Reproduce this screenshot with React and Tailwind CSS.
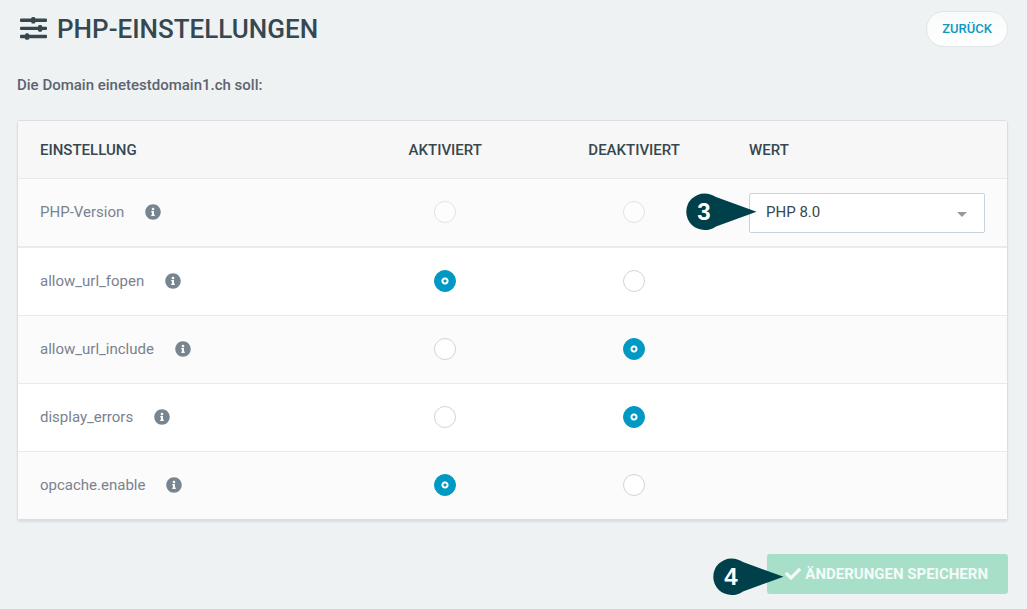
import React, { useState } from "react"
import { FaCheck, FaInfoCircle } from "react-icons/fa"

const switches = [
  { name: "allow_url_fopen", enabled: true },
  { name: "allow_url_include", enabled: false },
  { name: "display_errors", enabled: false },
  { name: "opcache.enable", enabled: true },
]

const radioClass =
  "block mx-auto w-[22px] h-[22px] appearance-none rounded-full border border-[#ced5dd] bg-white checked:border-[#0099c3] checked:bg-[radial-gradient(circle,#0099c3_1px,#fff_2px,#fff_3px,#0099c3_4px)] disabled:opacity-60"

const SlidersIcon = () => (
  <svg width="27" height="24" viewBox="0 0 27 24" fill="#37474f" aria-hidden="true">
    <rect x="0" y="1.6" width="27" height="3.4" rx="1" />
    <rect x="0" y="9.7" width="27" height="3.4" rx="1" />
    <rect x="0" y="17.8" width="27" height="3.4" rx="1" />
    <rect x="11.2" y="0" width="4.2" height="6.6" rx="1.5" />
    <rect x="18" y="8.1" width="4.2" height="6.6" rx="1.5" />
    <rect x="5" y="16.2" width="4.2" height="6.6" rx="1.5" />
  </svg>
)

// numbered drop-shaped pointer, the tip points to the right
const Marker = ({ number, className }) => (
  <svg
    width="72"
    height="38"
    viewBox="0 0 72 38"
    className={`absolute pointer-events-none ${className}`}
  >
    <path
      d="M18.5 0.5C23 0.5 26 1.8 30 4L70.5 18.8L30 33.4C26 36 23 37 18.5 37A18.25 18.25 0 0 1 18.5 0.5Z"
      fill="#00404a"
    />
    <text
      x="18"
      y="27"
      textAnchor="middle"
      fill="#fff"
      className="font-['Liberation_Sans',sans-serif] font-bold text-[24px]"
    >
      {number}
    </text>
  </svg>
)

const SettingName = ({ children }) => (
  <th scope="row" className="pl-[22px] text-left font-normal">
    <span className="flex items-center gap-[21px]">
      {children}
      <FaInfoCircle className="text-[#778591]" size={16} />
    </span>
  </th>
)

const App = () => {
  const [version, setVersion] = useState("8.0")
  const [values, setValues] = useState(
    Object.fromEntries(switches.map((s) => [s.name, s.enabled]))
  )

  const handleChange = (name, value) => {
    setValues((prev) => ({ ...prev, [name]: value }))
  }

  return (
    <main className="min-h-screen bg-[#eef2f3] pl-[17px] pr-[19px] pt-[11px] pb-[15px] font-[Roboto,sans-serif] text-[15px]">
      <header className="flex items-center justify-between">
        <h1 className="flex items-center gap-[10px] pl-[3px] text-[26px] leading-9 font-medium text-[#37474f]">
          <SlidersIcon />
          PHP-EINSTELLUNGEN
        </h1>
        <button
          type="button"
          className="h-9 px-[15px] rounded-full border border-[#e2e5e7] bg-linear-to-b from-[#f9fafb] to-white text-[13px] font-medium text-[#0e97c0]"
        >
          ZURÜCK
        </button>
      </header>

      <p className="mt-7 leading-5 font-medium text-[#5d6470]">
        Die Domain einetestdomain1.ch soll:
      </p>

      <form onSubmit={(e) => e.preventDefault()}>
        <div className="mt-[25px] rounded-[3px] border border-[#d9dfe2] bg-white shadow-[0_2px_2px_#d9dfe2]">
          <table className="w-full table-fixed border-collapse text-[#7a828f]">
            <thead className="bg-[#f7f7f7] text-[#37474f]">
              <tr className="h-[57px] border-b border-[#e9ebeb]">
                <th className="w-[33.5%] pl-[22px] pt-0.5 text-left font-medium">EINSTELLUNG</th>
                <th className="w-[19.4%] pt-0.5 font-medium">AKTIVIERT</th>
                <th className="w-[18.8%] pt-0.5 font-medium">DEAKTIVIERT</th>
                <th className="pl-[22px] pt-0.5 text-left font-medium">WERT</th>
              </tr>
            </thead>
            <tbody>
              <tr className="h-[69px] border-b-2 border-[#e9ebeb] bg-[#fbfbfb]">
                <SettingName>PHP-Version</SettingName>
                <td>
                  <input type="radio" name="php" disabled aria-label="PHP-Version aktiviert" className={radioClass} />
                </td>
                <td>
                  <input type="radio" name="php" disabled aria-label="PHP-Version deaktiviert" className={radioClass} />
                </td>
                <td className="px-[22px] pt-0.5">
                  <div className="relative">
                    <select
                      aria-label="PHP-Version"
                      value={version}
                      onChange={(e) => setVersion(e.target.value)}
                      className="block w-full h-10 appearance-none rounded-[2px] border border-[#c8d3de] bg-white pl-4 pb-[3px] text-[#37474f]"
                    >
                      <option value="8.0">PHP 8.0</option>
                      <option value="7.4">PHP 7.4</option>
                    </select>
                    <span className="absolute right-[18px] top-[19px] border-x-[5px] border-t-[5px] border-x-transparent border-t-[#999] pointer-events-none" />
                    <Marker number="3" className="-left-[63px] top-0" />
                  </div>
                </td>
              </tr>
              {switches.map(({ name }) => (
                <tr key={name} className="h-[68px] border-b border-[#e9ebeb] last:border-b-0 odd:bg-[#fbfbfb] even:bg-white">
                  <SettingName>{name}</SettingName>
                  <td>
                    <input
                      type="radio"
                      name={name}
                      aria-label={`${name} aktiviert`}
                      checked={values[name]}
                      onChange={() => handleChange(name, true)}
                      className={radioClass}
                    />
                  </td>
                  <td>
                    <input
                      type="radio"
                      name={name}
                      aria-label={`${name} deaktiviert`}
                      checked={!values[name]}
                      onChange={() => handleChange(name, false)}
                      className={radioClass}
                    />
                  </td>
                  <td />
                </tr>
              ))}
            </tbody>
          </table>
        </div>

        <div className="mt-[34px] flex justify-end">
          <div className="relative">
            <button
              type="submit"
              disabled
              className="flex h-10 items-center gap-1 rounded-[3px] bg-[#a7dfc8] pl-[18px] pr-5 text-[15px] font-bold text-[#f4fbf8]"
            >
              <FaCheck size={16} />
              ÄNDERUNGEN SPEICHERN
            </button>
            <Marker number="4" className="-left-[54px] top-1" />
          </div>
        </div>
      </form>
    </main>
  )
}

export default App
